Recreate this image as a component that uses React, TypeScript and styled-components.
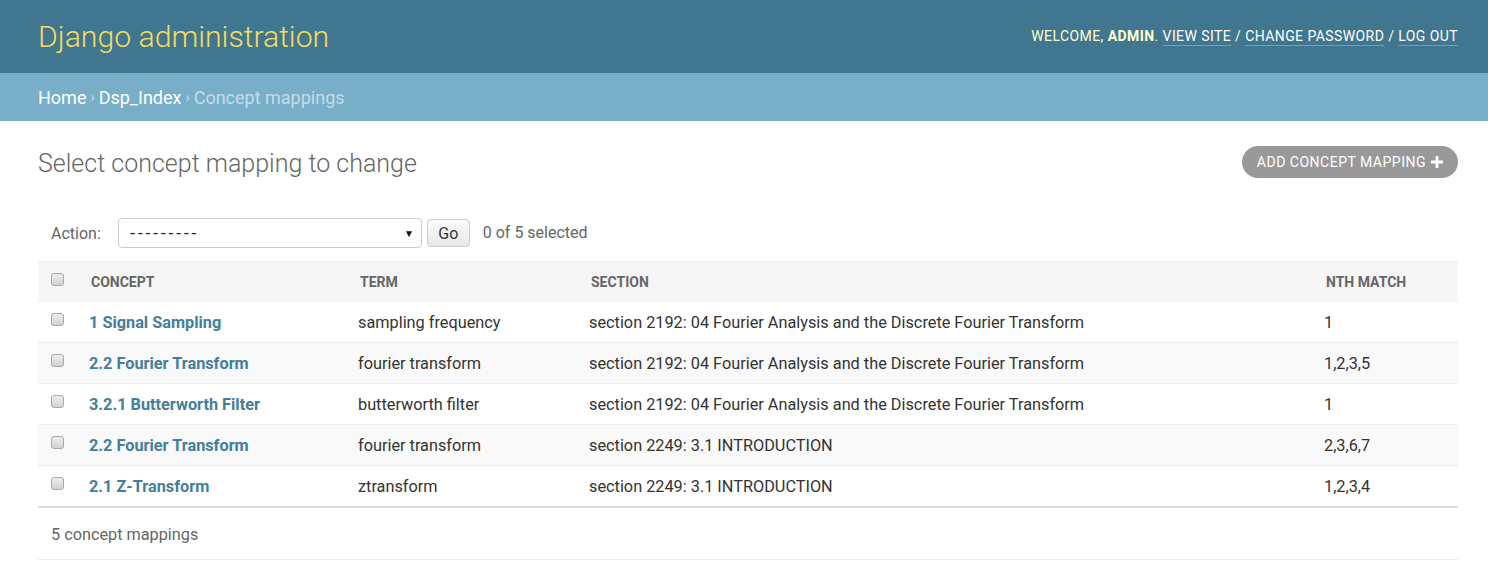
import React from 'react';
import styled, { createGlobalStyle } from 'styled-components';

const GlobalStyle = createGlobalStyle`
  html, body {
    margin: 0;
    padding: 0;
    background: #ffffff;
  }
  body {
    font-family: Roboto, "Liberation Sans", Arial, sans-serif;
    color: #333333;
    font-size: 16px;
  }
`;

const rows = [
  { concept: '1 Signal Sampling', term: 'sampling frequency', section: 'section 2192: 04 Fourier Analysis and the Discrete Fourier Transform', nth: '1' },
  { concept: '2.2 Fourier Transform', term: 'fourier transform', section: 'section 2192: 04 Fourier Analysis and the Discrete Fourier Transform', nth: '1,2,3,5' },
  { concept: '3.2.1 Butterworth Filter', term: 'butterworth filter', section: 'section 2192: 04 Fourier Analysis and the Discrete Fourier Transform', nth: '1' },
  { concept: '2.2 Fourier Transform', term: 'fourier transform', section: 'section 2249: 3.1 INTRODUCTION', nth: '2,3,6,7' },
  { concept: '2.1 Z-Transform', term: 'ztransform', section: 'section 2249: 3.1 INTRODUCTION', nth: '1,2,3,4' },
];

const App = () => {
  return (
    <Page>
      <GlobalStyle />
      <Header>
        <Branding>Django administration</Branding>
        <UserTools>
          WELCOME, <strong>ADMIN</strong>. <ToolLink href="#">VIEW SITE</ToolLink> /{' '}
          <ToolLink href="#">CHANGE PASSWORD</ToolLink> / <ToolLink href="#">LOG OUT</ToolLink>
        </UserTools>
      </Header>
      <Breadcrumbs>
        <CrumbLink href="#">Home</CrumbLink>
        <Sep>›</Sep>
        <CrumbLink href="#">Dsp_Index</CrumbLink>
        <Sep>›</Sep>
        <span>Concept mappings</span>
      </Breadcrumbs>
      <Content>
        <TitleRow>
          <Title>Select concept mapping to change</Title>
          <AddButton href="#">
            ADD CONCEPT MAPPING
            <PlusIcon viewBox="0 0 12 12">
              <path d="M4.6 0h2.8v4.6H12v2.8H7.4V12H4.6V7.4H0V4.6h4.6z" fill="#ffffff" />
            </PlusIcon>
          </AddButton>
        </TitleRow>
        <Actions>
          <ActionLabel>Action:</ActionLabel>
          <SelectBox>
            <Dashes>---------</Dashes>
            <Arrow>▼</Arrow>
          </SelectBox>
          <GoButton>Go</GoButton>
          <Counter>0 of 5 selected</Counter>
        </Actions>
        <ResultTable>
          <colgroup>
            <col style={{ width: 41 }} />
            <col style={{ width: 269 }} />
            <col style={{ width: 231 }} />
            <col style={{ width: 735 }} />
            <col style={{ width: 144 }} />
          </colgroup>
          <thead>
            <tr>
              <Th>
                <Check />
              </Th>
              <Th>CONCEPT</Th>
              <Th>TERM</Th>
              <Th>SECTION</Th>
              <Th>NTH MATCH</Th>
            </tr>
          </thead>
          <tbody>
            {rows.map((r, i) => (
              <Row key={i} $alt={i % 2 === 1}>
                <Td>
                  <Check />
                </Td>
                <Td>
                  <ConceptLink href="#">{r.concept}</ConceptLink>
                </Td>
                <Td>{r.term}</Td>
                <Td>{r.section}</Td>
                <Td>{r.nth}</Td>
              </Row>
            ))}
          </tbody>
        </ResultTable>
        <Paginator>5 concept mappings</Paginator>
      </Content>
    </Page>
  );
};

export default App;

const Page = styled.div`
  width: 1488px;
  min-height: 578px;
`;

const Header = styled.div`
  height: 73px;
  box-sizing: border-box;
  padding: 0 30px 0 38px;
  background: #417690;
  display: flex;
  justify-content: space-between;
  align-items: center;
`;

const Branding = styled.div`
  color: #f5dd5d;
  font-size: 30.2px;
  font-weight: 300;
`;

const UserTools = styled.div`
  color: #ffffcc;
  font-size: 14px;
  letter-spacing: 0.42px;
  font-weight: 400;
  margin-top: -1px;

  strong {
    font-weight: 700;
    color: #ffffcc;
  }
`;

const ToolLink = styled.a`
  color: #ffffff;
  text-decoration: none;
  border-bottom: 1px solid rgba(255, 255, 255, 0.3);
  padding-bottom: 1px;
`;

const Breadcrumbs = styled.div`
  height: 48px;
  box-sizing: border-box;
  padding: 0 38px;
  background: #79aec8;
  color: #c4dce8;
  font-size: 18px;
  display: flex;
  align-items: center;
`;

const CrumbLink = styled.a`
  color: #ffffff;
  text-decoration: none;
`;

const Sep = styled.span`
  margin: 0 4px;
  font-size: 14px;
`;

const Content = styled.div`
  padding: 0 30px 0 38px;
`;

const TitleRow = styled.div`
  margin-top: 25px;
  height: 32px;
  display: flex;
  justify-content: space-between;
  align-items: center;
`;

const Title = styled.h1`
  margin: 2px 0 0 0;
  font-size: 25px;
  font-weight: 300;
  color: #666666;
`;

const AddButton = styled.a`
  height: 32px;
  box-sizing: border-box;
  padding: 0 15px;
  border-radius: 16px;
  background: #999999;
  color: #ffffff;
  font-size: 14px;
  letter-spacing: 0.5px;
  text-decoration: none;
  display: flex;
  align-items: center;
  gap: 5px;
`;

const PlusIcon = styled.svg`
  width: 12px;
  height: 12px;
`;

const Actions = styled.div`
  margin-top: 40px;
  height: 30px;
  padding-left: 13px;
  display: flex;
  align-items: center;
`;

const ActionLabel = styled.span`
  color: #666666;
  font-size: 16px;
  margin-right: 17px;
`;

const SelectBox = styled.div`
  width: 304px;
  height: 30px;
  box-sizing: border-box;
  border: 1px solid #cccccc;
  border-radius: 4px;
  padding: 0 7px 0 11px;
  font-family: "Liberation Sans", Arial, sans-serif;
  color: #222222;
  display: flex;
  justify-content: space-between;
  align-items: center;
`;

const Dashes = styled.span`
  font-size: 17px;
  letter-spacing: 2px;
`;

const Arrow = styled.span`
  font-size: 10px;
  color: #111111;
`;

const GoButton = styled.button`
  margin-left: 5px;
  width: 43px;
  height: 28px;
  border: 1px solid #cccccc;
  border-radius: 4px;
  background: linear-gradient(#fafafa, #e8e8e8);
  color: #333333;
  font-family: Roboto, "Liberation Sans", sans-serif;
  font-size: 16px;
  padding: 0;
`;

const Counter = styled.span`
  margin-left: 13px;
  color: #666666;
  font-size: 16px;
  margin-top: -1px;
`;

const ResultTable = styled.table`
  margin-top: 13px;
  width: 1420px;
  table-layout: fixed;
  border-collapse: collapse;
`;

const Th = styled.th`
  height: 40px;
  box-sizing: border-box;
  padding: 0 0 0 12px;
  background: #f6f6f6;
  border-top: 1px solid #eeeeee;
  border-bottom: 1px solid #eeeeee;
  text-align: left;
  color: #666666;
  font-size: 14px;
  font-weight: 700;
  vertical-align: middle;

  &:first-child {
    padding-left: 13px;
  }
`;

const Row = styled.tr<{ $alt: boolean }>`
  background: ${(p) => (p.$alt ? '#f9f9f9' : '#ffffff')};
  border-bottom: 1px solid #eeeeee;

  &:last-child {
    border-bottom: 2px solid #dddddd;
  }
`;

const Td = styled.td`
  height: 40px;
  padding: 0 0 0 10px;
  color: #333333;
  font-size: 16.3px;
  vertical-align: middle;

  &:first-child {
    padding-left: 13px;
  }
`;

const Check = styled.span`
  display: block;
  width: 13px;
  height: 13px;
  box-sizing: border-box;
  border: 1px solid #a9a9a9;
  border-radius: 3px;
  background: linear-gradient(#eeeeee, #d2d2d2);
  margin-top: -5px;
`;

const ConceptLink = styled.a`
  color: #447e9b;
  font-weight: 700;
  text-decoration: none;
`;

const Paginator = styled.div`
  width: 1420px;
  height: 52px;
  box-sizing: border-box;
  padding-left: 13px;
  padding-top: 2px;
  border-bottom: 1px solid #eeeeee;
  color: #666666;
  font-size: 16.25px;
  display: flex;
  align-items: center;
`;
